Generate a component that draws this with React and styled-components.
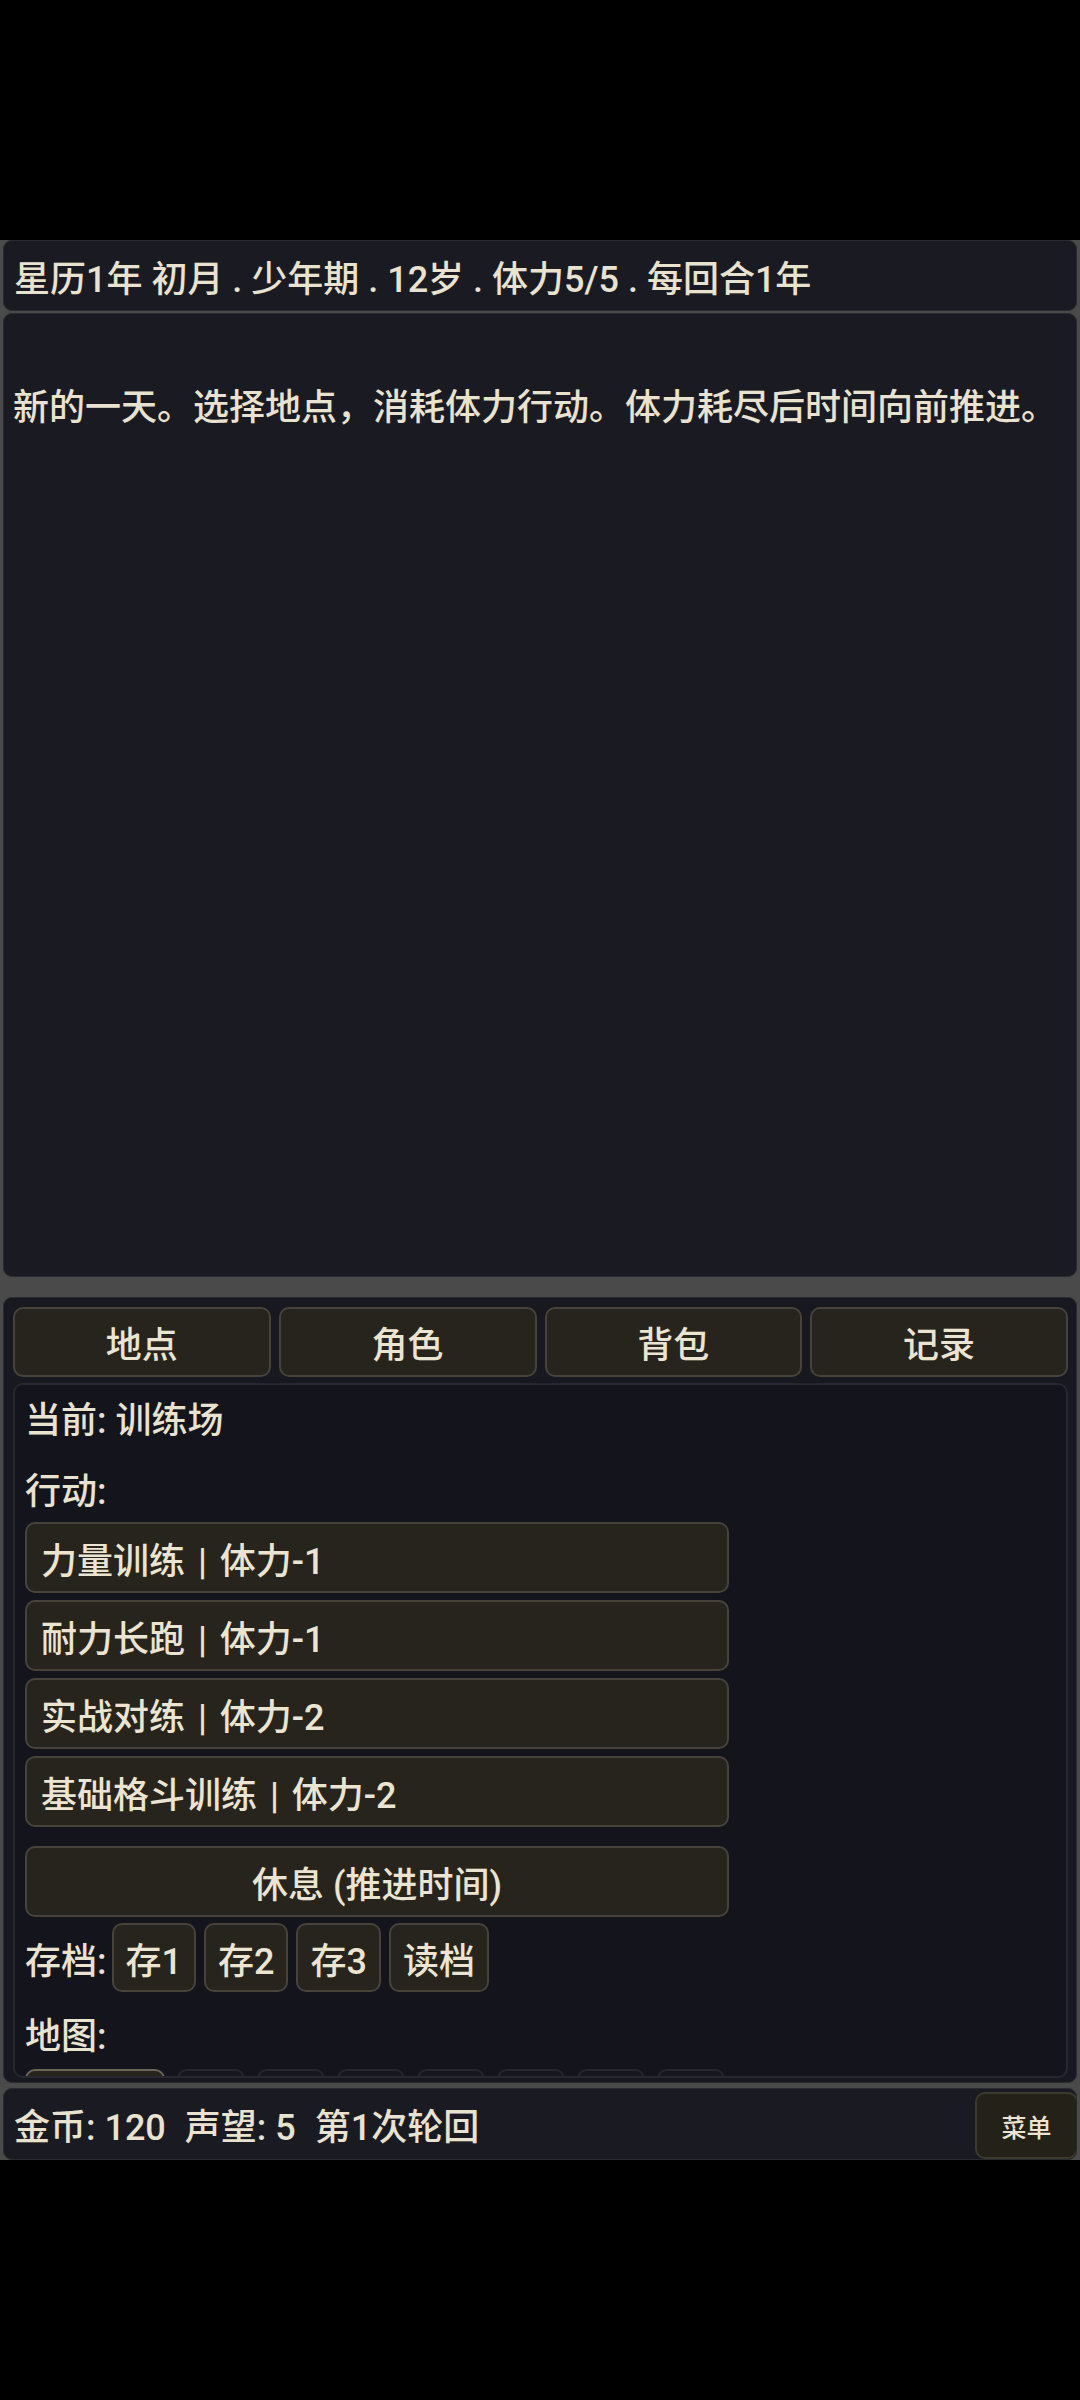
import React from "react";
import styled, { createGlobalStyle } from "styled-components";

const GlobalStyle = createGlobalStyle`
  html, body { margin: 0; padding: 0; background: #000; }
  body {
    font-family: Roboto, "Noto Sans CJK SC", sans-serif;
    font-weight: 500;
    color: #e9e2cf;
  }
  * { box-sizing: border-box; }
`;

const Page = styled.div`
  width: 1080px;
  height: 2400px;
  display: flex;
  flex-direction: column;
  background: #000;
`;

const SafeArea = styled.div`
  height: ${(p) => p.$h}px;
  flex: none;
  background: #000;
`;

const Shell = styled.div`
  height: 1920px;
  flex: none;
  display: flex;
  flex-direction: column;
  background: #4a4a4a;
  padding: 0 3px;
`;

const Panel = styled.div`
  background: ${(p) => p.$bg || "#1a1b22"};
  border-radius: 9px;
  border: 1px solid #2a2b31;
`;

const Header = styled(Panel)`
  height: 71px;
  flex: none;
  display: flex;
  align-items: center;
  padding: 0 10px;
  font-size: 36px;
  white-space: nowrap;
`;

const Log = styled(Panel)`
  flex: 1;
  min-height: 0;
  margin-top: 2px;
  padding: 66px 9px 12px;
  font-size: 36px;
  line-height: 56px;
  overflow: hidden;
`;

const Divider = styled.div`
  height: 20px;
  flex: none;
`;

const Bottom = styled(Panel)`
  height: 786px;
  flex: none;
  display: flex;
  flex-direction: column;
  gap: 6px;
  padding: 9px 8px 4px 9px;
  background: #171820;
`;

const Tabs = styled.div`
  display: grid;
  grid-template-columns: repeat(4, 1fr);
  gap: 8px;
  flex: none;
`;

const Button = styled.button`
  font-family: inherit;
  font-weight: 500;
  color: #ebe4d1;
  background: #27241d;
  border: 2px solid #47433a;
  border-radius: 10px;
  margin: 0;
  cursor: pointer;
`;

const Tab = styled(Button)`
  height: 70px;
  font-size: 36px;
  padding: 0;
`;

const Content = styled.div`
  flex: 1;
  min-height: 0;
  overflow: hidden;
  border: 2px solid #262730;
  border-radius: 10px;
  background: #13141c;
  padding: 8px 10px;
  display: flex;
  flex-direction: column;
`;

const Label = styled.div`
  font-size: 36px;
  line-height: 56px;
  margin-top: ${(p) => p.$mt || 0}px;
  flex: none;
`;

const ActionList = styled.div`
  display: flex;
  flex-direction: column;
  gap: 7px;
  width: 704px;
  margin-top: 2px;
  flex: none;
`;

const ActionButton = styled(Button)`
  height: 71px;
  font-size: 36px;
  text-align: ${(p) => (p.$center ? "center" : "left")};
  padding: 0 14px;
  margin-top: ${(p) => p.$mt || 0}px;
  white-space: pre;
`;

const Sep = styled.span`
  padding: 0 4px;
`;

const SaveRow = styled.div`
  display: flex;
  align-items: center;
  gap: 8px;
  margin-top: 6px;
  flex: none;
  font-size: 36px;
`;

const SaveLabel = styled.span`
  margin-right: -3px;
`;

const SmallButton = styled(Button)`
  height: 69px;
  font-size: 36px;
  padding: 0 12px;
`;

const MapRow = styled.div`
  display: flex;
  gap: 12px;
  margin-top: 4px;
  flex: none;
`;

const MapButton = styled(Button)`
  height: 69px;
  font-size: 36px;
  padding: 0 14px;
  border-color: ${(p) => (p.$active ? "#6b6656" : "#25262e")};
  background: ${(p) => (p.$active ? "#27241d" : "#15161e")};
`;

const Footer = styled(Panel)`
  height: 72px;
  flex: none;
  margin-top: 5px;
  display: flex;
  align-items: center;
  padding: 0 0 0 10px;
  font-size: 36px;
  white-space: nowrap;
  overflow: hidden;
`;

const Stats = styled.div`
  flex: 1;
  display: flex;
  gap: 19px;
`;

const MenuButton = styled(Button)`
  width: 103px;
  height: 67px;
  font-size: 25px;
  padding: 0;
  margin-right: -2px;
  margin-top: 3px;
  background: #242119;
  border-color: #3c392f;
`;

const tabs = ["地点", "角色", "背包", "记录"];
const actions = [
  ["力量训练", "体力-1"],
  ["耐力长跑", "体力-1"],
  ["实战对练", "体力-2"],
  ["基础格斗训练", "体力-2"],
];
const saves = ["存1", "存2", "存3", "读档"];
const maps = ["训练场", "？", "？", "？", "？", "？", "？", "？"];

export default function App() {
  return (
    <>
      <GlobalStyle />
      <Page>
        <SafeArea $h={240} />
        <Shell>
          <Header>星历1年 初月 . 少年期 . 12岁 . 体力5/5 . 每回合1年</Header>
          <Log>新的一天。选择地点，消耗体力行动。体力耗尽后时间向前推进。</Log>
          <Divider />
          <Bottom>
            <Tabs>
              {tabs.map((t) => (
                <Tab key={t}>{t}</Tab>
              ))}
            </Tabs>
            <Content>
              <Label>当前: 训练场</Label>
              <Label $mt={15}>行动:</Label>
              <ActionList>
                {actions.map(([name, cost]) => (
                  <ActionButton key={name}>
                    {name}
                    <Sep>{" | "}</Sep>
                    {cost}
                  </ActionButton>
                ))}
                <ActionButton $center $mt={12}>休息 (推进时间)</ActionButton>
              </ActionList>
              <SaveRow>
                <SaveLabel>存档:</SaveLabel>
                {saves.map((s) => (
                  <SmallButton key={s}>{s}</SmallButton>
                ))}
              </SaveRow>
              <Label $mt={17}>地图:</Label>
              <MapRow>
                {maps.map((m, i) => (
                  <MapButton key={i} $active={i === 0}>{m}</MapButton>
                ))}
              </MapRow>
            </Content>
          </Bottom>
          <Footer>
            <Stats>
              <span>金币: 120</span>
              <span>声望: 5</span>
              <span>第1次轮回</span>
            </Stats>
            <MenuButton>菜单</MenuButton>
          </Footer>
        </Shell>
        <SafeArea $h={240} />
      </Page>
    </>
  );
}
